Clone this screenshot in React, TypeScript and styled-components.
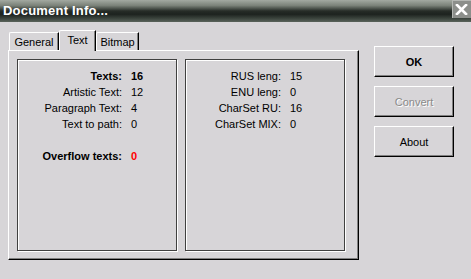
import React from 'react'
import styled, { createGlobalStyle } from 'styled-components'

const GlobalStyle = createGlobalStyle`
  html, body {
    margin: 0;
    padding: 0;
    background: #d7d5d8;
  }
  body {
    font-family: 'Liberation Sans', Arial, sans-serif;
    font-size: 11px;
    color: #000;
  }
`;

const WindowS = styled.div`
  width: 471px;
  height: 279px;
  background: #d7d5d8;
  overflow: hidden;
`;

const TitleBar = styled.div`
  display: flex;
  justify-content: space-between;
  align-items: flex-start;
  height: 22px;
  background: linear-gradient(#a3a9a1 0%, #7b8279 25%, #262c27 50%, #1d231f 65%, #3d463f 85%, #5a635b 100%);
`;

const Title = styled.div`
  padding-left: 3px;
  line-height: 21px;
  font-size: 13px;
  font-weight: bold;
  color: #fff;
  letter-spacing: 0.2px;
`;

const CloseBox = styled.div`
  width: 19px;
  height: 18px;
  display: flex;
  align-items: center;
  justify-content: center;
  background: #8c8f8b;
  box-shadow: inset 1px 1px 0 #b5b8b4;
`;

const Body = styled.div`
  display: flex;
  align-items: flex-start;
  padding: 8px 0 0 8px;
`;

const Left = styled.div`
  display: flex;
  flex-direction: column;
  width: 351px;
`;

const TabStrip = styled.div`
  display: flex;
  align-items: flex-end;
  height: 20px;
  padding-left: 1px;
`;

const Tab = styled.div<{ $active?: boolean; $w: number }>`
  display: flex;
  align-items: center;
  justify-content: center;
  box-sizing: border-box;
  height: ${(p) => (p.$active ? '21px' : '18px')};
  width: ${(p) => p.$w}px;
  margin-bottom: ${(p) => (p.$active ? '-1px' : '0')};
  padding-bottom: ${(p) => (p.$active ? '3px' : '0')};
  background: #d7d5d8;
  border-top: 1px solid #fff;
  border-left: 1px solid #fff;
  border-right: 1px solid #000;
  border-top-left-radius: 2px;
  box-shadow: inset -1px 0 0 #808080;
  position: relative;
  z-index: ${(p) => (p.$active ? 2 : 1)};
`;

const Panel = styled.div`
  box-sizing: border-box;
  height: 210px;
  display: flex;
  gap: 8px;
  padding: 8px 0 0 8px;
  border-top: 1px solid #fff;
  border-left: 1px solid #fff;
  border-right: 1px solid #000;
  border-bottom: 1px solid #000;
  box-shadow: inset -1px -1px 0 #808080;
`;

const GroupBox = styled.div`
  box-sizing: border-box;
  width: 160px;
  height: 192px;
  padding-top: 8px;
  border: 1px solid #404040;
  box-shadow: inset 1px 1px 0 #fff, 1px 1px 0 #fff;
`;

const Grid = styled.div<{ $labelWidth: number }>`
  display: grid;
  grid-template-columns: ${(p) => p.$labelWidth}px auto;
  column-gap: 9px;
  grid-auto-rows: 16px;
  align-items: center;
`;

const Spacer = styled.div`
  grid-column: 1 / -1;
`;

const Label = styled.span<{ $bold?: boolean }>`
  text-align: right;
  white-space: nowrap;
  font-weight: ${(p) => (p.$bold ? 'bold' : 'normal')};
  grid-column: 1;
`;

const Value = styled.span<{ $bold?: boolean; $red?: boolean }>`
  font-weight: ${(p) => (p.$bold ? 'bold' : 'normal')};
  color: ${(p) => (p.$red ? '#ff0000' : '#000')};
`;

const ButtonCol = styled.div`
  display: flex;
  flex-direction: column;
  gap: 9px;
  margin: 16px 0 0 15px;
`;

const Button = styled.div<{ $bold?: boolean; $disabled?: boolean }>`
  box-sizing: border-box;
  width: 80px;
  height: 31px;
  display: flex;
  align-items: center;
  justify-content: center;
  border-top: 1px solid #fff;
  border-left: 1px solid #fff;
  border-right: 1px solid #000;
  border-bottom: 1px solid #000;
  box-shadow: inset -1px -1px 0 #808080;
  font-weight: ${(p) => (p.$bold ? 'bold' : 'normal')};
  color: ${(p) => (p.$disabled ? '#8a8a8a' : '#000')};
  text-shadow: ${(p) => (p.$disabled ? '1px 1px 0 #fff' : 'none')};
`;

type TRow = { label: string; value: string; bold?: boolean; red?: boolean; gap?: boolean };

const leftRows: TRow[] = [
  { label: 'Texts:', value: '16', bold: true },
  { label: 'Artistic Text:', value: '12' },
  { label: 'Paragraph Text:', value: '4' },
  { label: 'Text to path:', value: '0' },
  { label: 'Overflow texts:', value: '0', bold: true, red: true, gap: true },
];

const rightRows: TRow[] = [
  { label: 'RUS leng:', value: '15' },
  { label: 'ENU leng:', value: '0' },
  { label: 'CharSet RU:', value: '16' },
  { label: 'CharSet MIX:', value: '0' },
];

function Rows({ rows, labelWidth }: { rows: TRow[]; labelWidth: number }) {
  return (
    <Grid $labelWidth={labelWidth}>
      {rows.map((r) => (
        <React.Fragment key={r.label}>
          {r.gap && <Spacer />}
          <Label $bold={r.bold}>{r.label}</Label>
          <Value $bold={r.bold} $red={r.red}>{r.value}</Value>
        </React.Fragment>
      ))}
    </Grid>
  );
}

export default function App() {
  return (
    <WindowS>
      <GlobalStyle />
      <TitleBar>
        <Title>Document Info...</Title>
        <CloseBox>
          <svg width="13" height="11" viewBox="0 0 13 11">
            <path d="M2 1 L11 10 M11 1 L2 10" stroke="#fff" strokeWidth="2.6" strokeLinecap="square" />
          </svg>
        </CloseBox>
      </TitleBar>
      <Body>
        <Left>
          <TabStrip>
            <Tab $w={50}>General</Tab>
            <Tab $w={37} $active>Text</Tab>
            <Tab $w={43}>Bitmap</Tab>
          </TabStrip>
          <Panel>
            <GroupBox>
              <Rows rows={leftRows} labelWidth={104} />
            </GroupBox>
            <GroupBox>
              <Rows rows={rightRows} labelWidth={95} />
            </GroupBox>
          </Panel>
        </Left>
        <ButtonCol>
          <Button $bold>OK</Button>
          <Button $disabled>Convert</Button>
          <Button>About</Button>
        </ButtonCol>
      </Body>
    </WindowS>
  )
}
